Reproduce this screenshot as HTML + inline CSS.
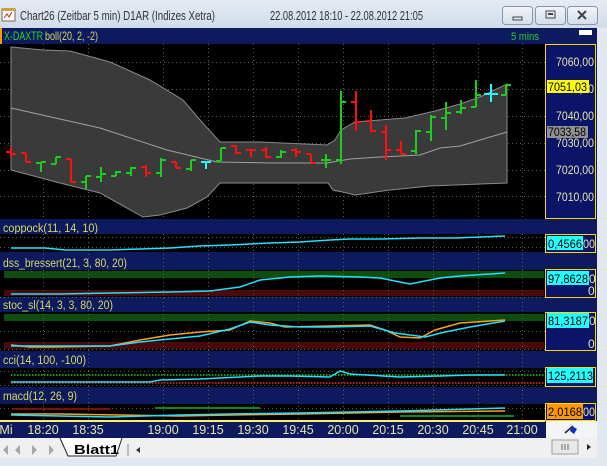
<!DOCTYPE html>
<html><head><meta charset="utf-8"><style>
html,body{margin:0;padding:0;width:607px;height:466px;overflow:hidden;background:#dfe6ef;font-family:"Liberation Sans",sans-serif}
svg{position:absolute;left:0;top:0}
</style></head><body>
<svg width="607" height="466" viewBox="0 0 607 466" xmlns="http://www.w3.org/2000/svg" font-family="Liberation Sans, sans-serif">
<defs>
<linearGradient id="tb" x1="0" y1="0" x2="0" y2="1"><stop offset="0" stop-color="#e4ebf4"/><stop offset="1" stop-color="#d2dcea"/></linearGradient>
<linearGradient id="btn" x1="0" y1="0" x2="0" y2="1"><stop offset="0" stop-color="#f2f5f9"/><stop offset="1" stop-color="#d5dde8"/></linearGradient>
</defs>
<rect x="0" y="0" width="607" height="28" fill="url(#tb)"/>
<rect x="2" y="9" width="13" height="12" fill="#fff" stroke="#806040"/>
<rect x="2" y="8" width="13" height="3" fill="#d0a040"/>
<path d="M4 18 l3-4 2 3 3-5" stroke="#d02020" fill="none"/>
<text x="20" y="20" font-size="13" fill="#333" textLength="195" lengthAdjust="spacingAndGlyphs">Chart26 (Zeitbar 5 min)  D1AR (Indizes Xetra)</text>
<text x="270" y="20" font-size="13" fill="#333" textLength="153" lengthAdjust="spacingAndGlyphs">22.08.2012 18:10 - 22.08.2012 21:05</text>
<rect x="502.5" y="6.5" width="30" height="18" rx="3" fill="url(#btn)" stroke="#8a97a8"/>
<rect x="513" y="17" width="9" height="3" fill="none" stroke="#444"/>
<rect x="535.5" y="6.5" width="30" height="18" rx="3" fill="url(#btn)" stroke="#8a97a8"/>
<rect x="546" y="11" width="9" height="7" fill="none" stroke="#444"/><rect x="548" y="13" width="5" height="2" fill="#444"/>
<rect x="567.5" y="6.5" width="30" height="18" rx="3" fill="url(#btn)" stroke="#8a97a8"/>
<path d="M578 11 l8 8 M586 11 l-8 8" stroke="#444" stroke-width="2"/>
<rect x="597" y="28" width="10" height="438" fill="#e2e8f0"/>
<rect x="0" y="28" width="597" height="410" fill="#0e1a60"/>
<rect x="0" y="28" width="2" height="16" fill="#ff9900"/>
<text x="4" y="40" font-size="12" fill="#22dd22" textLength="39" lengthAdjust="spacingAndGlyphs">X-DAXTR</text>
<text x="45" y="40" font-size="12" fill="#d8d860" textLength="53" lengthAdjust="spacingAndGlyphs">boll(20, 2, -2)</text>
<text x="511" y="40" font-size="11" fill="#22cc22" textLength="28" lengthAdjust="spacingAndGlyphs">5 mins</text>
<rect x="579" y="30" width="13" height="5" fill="#fff"/>
<rect x="0" y="44" width="545" height="175" fill="#000"/>
<g stroke="#4d6a4d" stroke-dasharray="1,3" stroke-width="1">
<path d="M0 62.5H545M0 89.5H545M0 116.5H545M0 143.5H545M0 170.5H545M0 196.5H545"/>
<path d="M43.5 44V219M88.5 44V219M163.5 44V219M208.5 44V219M253.5 44V219M298.5 44V219M343.5 44V219M388.5 44V219M433.5 44V219M478.5 44V219M522.5 44V219"/>
</g>
<polygon fill="#3a3a3a" stroke="#8a8a8a" stroke-width="1" points="11,47 43,50 70,51 110,62 150,80 183,100 200,120 220,142 260,142 327,145 335,140 341,130 355,122 380,120 405,118 435,111 460,104 480,97 507,84 507,183 480,184 430,186 390,190 355,195 347,193 333,190 328,183 220,183 207,197 187,208 160,215 143,217 100,193 60,183 11,170"/>
<polyline fill="none" stroke="#a0a0a0" stroke-width="1" points="11,108 100,128 167,150 217,162 273,163 327,163 350,159 380,157 420,155 440,148 460,146 480,140 507,132"/>
<g fill="none" stroke-width="2">
<path stroke="#ff1010" d="M6,152h5M11,147V157M11,154h5 M21,153h5M26,153V162M26,162h5 M66,159h5M71,159V182M71,182h5 M141,167h5M146,165V177M146,173h5 M171,162h5M176,162V168M176,168h5 M231,146h5M236,146V154M236,153h5 M246,150h5M251,149V157M251,150h5 M261,150h5M266,147V158M266,157h5 M291,150h5M296,148V157M296,152h5 M306,154h5M311,154V163M311,163h5 M351,102h5M356,91V131M356,122h5 M366,121h5M371,110V132M371,131h5 M381,132h5M386,125V160M386,150h5 M396,150h5M401,141V154M401,154h5"/>
<path stroke="#1ecc1e" d="M36,163h5M41,162V172M41,162h5 M51,164h5M56,157V164M56,157h5 M81,182h5M86,176V189M86,176h5 M96,177h5M101,167V182M101,174h5 M111,176h5M116,171V176M116,172h5 M126,173h5M131,167V176M131,168h5 M156,173h5M161,158V177M161,160h5 M186,169h5M191,160V171M191,160h5 M216,161h5M221,148V161M221,148h5 M276,157h5M281,150V158M281,152h5 M321,160h5M326,154V168M326,160h5 M336,160h5M341,91V164M341,102h5 M411,151h5M416,130V154M416,131h5 M426,132h5M431,115V141M431,117h5 M441,118h5M446,102V130M446,113h5 M456,112h5M461,100V114M461,108h5 M471,107h5M476,80V107M476,95h5 M501,95h5M506,84V95M506,85h5"/>
<path stroke="#22ffff" d="M201,162h10M206,162V169 M484,94h14M491,84V102"/>
</g>
<rect x="545.5" y="44.5" width="50" height="174" fill="#0a1468" stroke="#ffd700"/>
<g font-size="12" fill="#e6e6a8">
<text x="556" y="66" textLength="38" lengthAdjust="spacingAndGlyphs">7060,00</text><text x="556" y="93" textLength="38" lengthAdjust="spacingAndGlyphs">7050,00</text><text x="556" y="120" textLength="38" lengthAdjust="spacingAndGlyphs">7040,00</text><text x="556" y="147" textLength="38" lengthAdjust="spacingAndGlyphs">7030,00</text><text x="556" y="174" textLength="38" lengthAdjust="spacingAndGlyphs">7020,00</text><text x="556" y="201" textLength="38" lengthAdjust="spacingAndGlyphs">7010,00</text>
</g>
<rect x="547" y="80" width="42" height="13" fill="#ffff00"/><text x="548" y="91" font-size="12" fill="#000" textLength="39" lengthAdjust="spacingAndGlyphs">7051,03</text>
<rect x="547" y="126" width="41" height="12" fill="#909090"/><text x="548" y="136" font-size="11.5" fill="#000" textLength="38" lengthAdjust="spacingAndGlyphs">7033,58</text>
<g font-size="11.5" fill="#d8d860">
<text x="3" y="232" textLength="95" lengthAdjust="spacingAndGlyphs">coppock(11, 14, 10)</text>
<text x="3" y="267" textLength="124" lengthAdjust="spacingAndGlyphs">dss_bressert(21, 3, 80, 20)</text>
<text x="3" y="309" textLength="110" lengthAdjust="spacingAndGlyphs">stoc_sl(14, 3, 3, 80, 20)</text>
<text x="3" y="364" textLength="83" lengthAdjust="spacingAndGlyphs">cci(14, 100, -100)</text>
<text x="3" y="400" textLength="74" lengthAdjust="spacingAndGlyphs">macd(12, 26, 9)</text>
</g>
<rect x="0" y="234" width="545" height="18" fill="#000"/>
<rect x="0" y="270" width="545" height="27" fill="#000"/>
<rect x="0" y="312" width="545" height="39" fill="#000"/>
<rect x="0" y="368" width="545" height="19" fill="#000"/>
<rect x="0" y="404" width="545" height="16" fill="#000"/>
<rect x="4" y="271" width="540" height="7" fill="#0d4d0d"/>
<rect x="4" y="290" width="540" height="6" fill="#4a0a0a"/>
<rect x="4" y="314" width="540" height="7" fill="#0d4d0d"/>
<rect x="4" y="342" width="540" height="7" fill="#4a0a0a"/>
<g stroke="#4d6a4d" stroke-dasharray="1,3">
<path d="M0 237.5H545M0 247.5H545M0 297.5H545M0 331.5H545M0 349.5H545M0 371.5H545M0 385.5H545M0 408.5H545"/>
<path d="M43.5 234V420M88.5 234V420M163.5 234V420M208.5 234V420M253.5 234V420M298.5 234V420M343.5 234V420M388.5 234V420M433.5 234V420M478.5 234V420M522.5 234V420"/>
</g>
<g fill="none" stroke-width="1.5">
<polyline stroke="#22e0ff" points="11,248 45,248 65,250 110,250 140,249 170,248 200,246 230,245 270,243 300,242 330,240 350,239 380,239 420,238 455,238 480,237 505,236"/>
<polyline stroke="#22e0ff" points="11,294 60,294 110,293 170,292 210,291 240,287 260,280 290,277 320,276 360,277 380,278 390,280 400,282 410,284 425,281 440,278 460,276 505,273"/>
<polyline stroke="#ffa020" points="11,345 30,347 50,347 110,346 140,340 170,335 200,332 230,330 250,321 270,323 285,327 330,326 370,325 385,330 400,337 420,338 435,330 460,323 505,320"/>
<polyline stroke="#22e0ff" points="11,346 50,346 110,346 140,342 170,339 200,336 230,329 250,322 270,325 300,327 330,327 370,326 395,333 425,337 445,332 470,327 505,321"/>
<path stroke="#22cc22" stroke-dasharray="1.5,1.5" d="M11 375H545"/>
<path stroke="#ff2020" stroke-dasharray="1.5,1.5" d="M11 383H545"/>
<polyline stroke="#22e0ff" points="11,382 150,382 160,380 200,379 220,378 260,376 290,376 330,377 340,371 350,374 400,377 440,376 470,375 505,375"/>
<path stroke="#a01010" d="M13 409H110"/>
<path stroke="#118811" stroke-width="2" d="M155 408H260 M400 416H514"/>
<polyline stroke="#ffa020" points="11,414 60,414 120,415 180,416 230,415 300,414 400,412 505,411"/>
<polyline stroke="#22e0ff" points="11,415 60,416 110,417 180,415 230,414 300,413 400,411 470,409 505,408"/>
</g>
<g fill="#0a1468" stroke="#ffd700">
<rect x="545.5" y="234.5" width="50" height="18"/>
<rect x="545.5" y="269.5" width="50" height="28"/>
<rect x="545.5" y="312.5" width="50" height="38"/>
<rect x="545.5" y="367.5" width="50" height="19"/>
<rect x="545.5" y="403.5" width="50" height="17"/>
</g>
<g font-size="12">
<rect x="547" y="236" width="36" height="14" fill="#22ffff"/><text x="548" y="248" fill="#000" textLength="34" lengthAdjust="spacingAndGlyphs">0,4566</text><text x="583" y="248" fill="#e6e6a8" textLength="12" lengthAdjust="spacingAndGlyphs">00</text>
<rect x="547" y="271" width="42" height="14" fill="#22ffff"/><text x="548" y="283" fill="#000" textLength="40" lengthAdjust="spacingAndGlyphs">97,8628</text><text x="589" y="283" fill="#e6e6a8">0</text><text x="588" y="295" fill="#e6e6a8">0</text>
<rect x="547" y="313" width="42" height="15" fill="#22ffff"/><text x="548" y="325" fill="#000" textLength="40" lengthAdjust="spacingAndGlyphs">81,3187</text><text x="589" y="325" fill="#e6e6a8">0</text><text x="588" y="348" fill="#e6e6a8">0</text>
<rect x="547" y="368" width="46" height="15" fill="#22ffff"/><text x="548" y="380" fill="#000" textLength="45" lengthAdjust="spacingAndGlyphs">125,2113</text>
<rect x="547" y="404" width="36" height="15" fill="#ff9900"/><text x="548" y="416" fill="#000" textLength="34" lengthAdjust="spacingAndGlyphs">2,0168</text><text x="583" y="416" fill="#e6e6a8" textLength="12" lengthAdjust="spacingAndGlyphs">00</text>
</g>
<rect x="0" y="420" width="545" height="2" fill="#ffee66"/>
<g font-size="12.5" fill="#e6e6a8" text-anchor="middle">
<text x="6" y="434">Mi</text><text x="43" y="434">18:20</text><text x="88" y="434">18:35</text><text x="163" y="434">19:00</text><text x="208" y="434">19:15</text><text x="253" y="434">19:30</text><text x="298" y="434">19:45</text><text x="343" y="434">20:00</text><text x="388" y="434">20:15</text><text x="433" y="434">20:30</text><text x="478" y="434">20:45</text><text x="522" y="434">21:00</text>
</g>
<rect x="546" y="421" width="51" height="17" fill="#f2f4f8"/>
<path d="M565 433 l8-7" stroke="#223" stroke-width="1.5"/><path d="M572 426 l5 3 -3 5 -4-3z" fill="#1030c0"/>
<rect x="0" y="438" width="597" height="20" fill="#f0f0f0"/>
<rect x="0" y="458" width="607" height="8" fill="#e2e8f0"/>
<g fill="#a8a8a8"><path d="M3 450 l5-5v10z M15 450l5-5v10z M32 445l5 5-5 5z M49 445l5 5-5 5z"/></g>
<path d="M60 438 l8 18 h48 l6-18" fill="#fff" stroke="#222"/>
<text x="74" y="454" font-size="13" font-weight="bold" fill="#000" textLength="45" lengthAdjust="spacingAndGlyphs">Blatt1</text>
<path d="M128 444 v12" stroke="#888"/>
<path d="M136 450 l4-3v6z" fill="#333"/>
<rect x="552" y="440" width="26" height="14" fill="#e8e8e8" stroke="#a0a0a0"/>
<path d="M562 444v6M565 444v6M568 444v6" stroke="#666"/>
<path d="M587 444 l4 3-4 3z" fill="#222"/>
</svg>
</body></html>
